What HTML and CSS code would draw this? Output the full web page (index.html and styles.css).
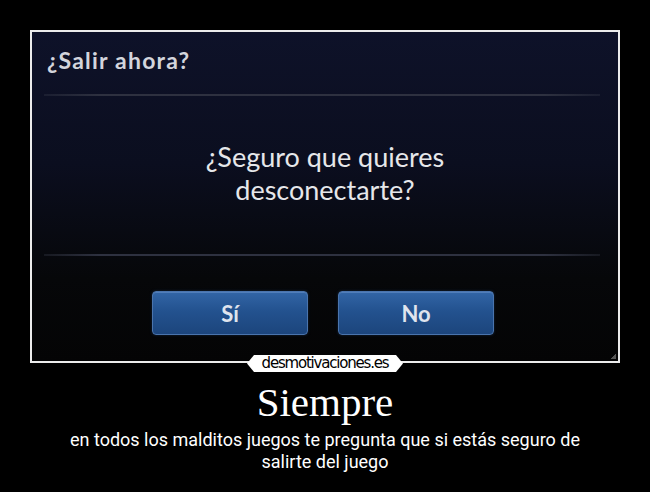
FILE: index.html
```html
<!DOCTYPE html>
<html lang="es">
<head>
  <meta charset="UTF-8" />
  <meta name="viewport" content="width=device-width, initial-scale=1.0"/>
  <title>Siempre</title>
  <link rel="stylesheet" href="styles.css">
</head>
<body>
  <div class="poster">
    <div class="frame">
      <div class="dialog">
        <div class="dialog-title">¿Salir ahora?</div>
        <div class="divider"></div>
        <div class="dialog-body">¿Seguro que quieres<br>desconectarte?</div>
        <div class="divider"></div>
        <div class="dialog-actions">
          <button class="btn">Sí</button>
          <button class="btn">No</button>
        </div>
        <div class="grip"></div>
      </div>
      <div class="brand">desmotivaciones.es</div>
    </div>

    <h1 class="caption">Siempre</h1>
    <p class="subcaption">en todos los malditos juegos te pregunta que si estás seguro de salirte del juego</p>
  </div>
</body>
</html>
```

FILE: styles.css
```css
* {
  box-sizing: border-box;
  margin: 0;
  padding: 0;
}

body {
  background: #000;
  font-family: "Liberation Sans", Arial, sans-serif;
  color: #fff;
}

.poster {
  width: 650px;
  height: 492px;
  padding-top: 30px;
}

.frame {
  position: relative;
  width: 590px;
  height: 333px;
  margin: 0 auto;
  border: 2px solid #ececec;
  background: #000;
}

.dialog {
  position: relative;
  height: 100%;
  display: flex;
  flex-direction: column;
  background: linear-gradient(to bottom, #0e1229 0%, #0b0e1f 40%, #060709 75%, #040405 100%);
  font-family: Lato, "Open Sans", sans-serif;
}

.dialog-title {
  height: 62px;
  padding: 14px 0 0 15px;
  font-size: 23px;
  font-weight: bold;
  color: #d3d5dc;
  letter-spacing: 1.2px;
}

.divider {
  height: 2px;
  margin: 0 18px 0 12px;
  background: linear-gradient(to right, rgba(60, 64, 78, 0.3), #2e3140 10%, #2e3140 90%, rgba(60, 64, 78, 0.3));
}

.dialog-body {
  height: 158px;
  display: flex;
  align-items: center;
  justify-content: center;
  text-align: center;
  font-size: 27px;
  line-height: 33px;
  color: #e6e7ea;
  padding-bottom: 4px;
}

.dialog-actions {
  display: flex;
  justify-content: center;
  gap: 30px;
  padding-top: 35px;
  padding-right: 4px;
}

.btn {
  width: 156px;
  height: 44px;
  border: 1px solid #4a74ad;
  border-radius: 4px;
  background: linear-gradient(to bottom, #3265a6 0%, #23528f 45%, #1c457c 100%);
  box-shadow: inset 0 1px 0 rgba(140, 175, 225, 0.35), 0 0 3px rgba(40, 80, 140, 0.4);
  font-family: Lato, "Open Sans", sans-serif;
  font-size: 22px;
  font-weight: bold;
  color: #dfe4ee;
}

.grip {
  position: absolute;
  right: 2px;
  bottom: 2px;
  width: 5px;
  height: 5px;
  background: linear-gradient(135deg, transparent 50%, #555 50%);
}

/* site badge sitting on the bottom edge of the frame */
.brand {
  position: absolute;
  left: 50%;
  bottom: -11px;
  transform: translateX(-50%);
  width: 156px;
  height: 17px;
  background: #fff;
  clip-path: polygon(7px 0, calc(100% - 7px) 0, 100% 50%, calc(100% - 7px) 100%, 7px 100%, 0 50%);
  color: #000;
  font-family: "DejaVu Sans", sans-serif;
  font-size: 15px;
  line-height: 16px;
  letter-spacing: -1.2px;
  text-align: center;
}

.caption {
  margin-top: 16px;
  font-family: "Liberation Serif", "Times New Roman", serif;
  font-weight: normal;
  font-size: 41px;
  line-height: 46px;
  text-align: center;
  color: #fff;
}

.subcaption {
  width: 530px;
  margin: 4px auto 0;
  font-family: Roboto, "Liberation Sans", sans-serif;
  font-size: 18px;
  line-height: 22px;
  text-align: center;
  color: #fff;
}
```
